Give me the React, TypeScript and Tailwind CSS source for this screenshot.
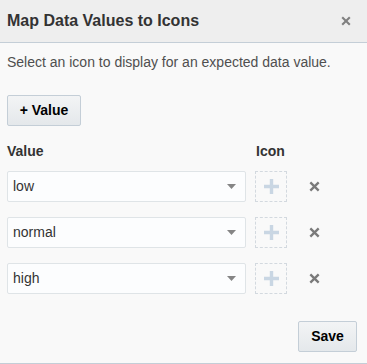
const rows = ["low", "normal", "high"];

function Cross({ size, color }: { size: number; color: string }) {
  return (
    <svg width={size} height={size} viewBox="0 0 10 10">
      <path d="M1.2 1.2 L8.8 8.8 M8.8 1.2 L1.2 8.8" stroke={color} strokeWidth="2.1" />
    </svg>
  );
}

export default function App() {
  return (
    <div
      className="w-[367px] h-[364px] flex flex-col bg-[#f9f9f9] border-b border-[#c4ced7] text-[#333333]"
      style={{ fontFamily: '"Liberation Sans", Arial, sans-serif' }}
    >
      {/* Header */}
      <div className="h-[43px] shrink-0 flex items-center justify-between pl-[7px] pr-[16px] bg-[#eeeeee] border-b border-[#c4ced7]">
        <h1 className="text-[16px] font-bold text-[#333333]">Map Data Values to Icons</h1>
        <Cross size={10} color="#808080" />
      </div>

      <div className="flex-1 flex flex-col px-[7px]">
        <p className="mt-[11px] text-[14px] text-[#4f4f4f] leading-[16px]">
          Select an icon to display for an expected data value.
        </p>

        <div className="mt-[25px]">
          <button className="w-[74px] h-[31px] rounded-[2px] border border-[#c4ced7] bg-gradient-to-b from-[#f3f4f5] to-[#e4e8eb] text-[14px] font-bold text-[#000000]">
            + Value
          </button>
        </div>

        <div className="mt-[17px] flex text-[14px] font-bold text-[#333333] leading-[16px]">
          <span className="w-[249px]">Value</span>
          <span>Icon</span>
        </div>

        <div className="mt-[12px] flex flex-col gap-[15px]">
          {rows.map((r) => (
            <div key={r} className="flex items-center h-[31px]">
              <div className="w-[239px] h-[31px] flex items-center justify-between pl-[5px] pr-[9px] bg-[#fcfdfe] border border-[#dfe4e7] rounded-[2px]">
                <span className="text-[14px] text-[#333333]">{r}</span>
                <svg width="9" height="5" viewBox="0 0 9 5">
                  <path d="M0 0 L9 0 L4.5 5 Z" fill="#858585" />
                </svg>
              </div>
              <div className="ml-[9px] w-[32px] h-[31px] flex items-center justify-center border border-dashed border-[#d3d9df]">
                <svg width="15" height="15" viewBox="0 0 15 15">
                  <path d="M7.5 0 V15 M0 7.5 H15" stroke="#c9d6e3" strokeWidth="3.4" />
                </svg>
              </div>
              <div className="ml-[22px]">
                <Cross size={11} color="#7a7a7a" />
              </div>
            </div>
          ))}
        </div>

        <div className="mt-auto mb-[11px] flex justify-end pr-[3px]">
          <button className="w-[59px] h-[31px] rounded-[2px] border border-[#c4ced7] bg-gradient-to-b from-[#f3f4f5] to-[#e4e8eb] text-[14px] font-bold text-[#000000]">
            Save
          </button>
        </div>
      </div>
    </div>
  );
}
